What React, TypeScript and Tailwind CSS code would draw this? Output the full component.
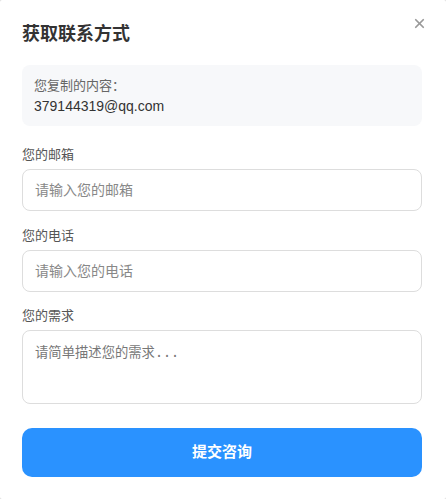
import React from "react";
import { X } from "lucide-react";

const cjk = "font-['Liberation_Sans','Noto_Sans_CJK_SC',sans-serif]";

export default function App() {
  return (
    <div className={`w-[446px] h-[499px] bg-[#d8d8d8] ${cjk}`}>
      <div className="relative w-full h-full bg-white rounded-[2px] pt-[22px] pl-[22px] pr-[24px] flex flex-col">
        <button className="absolute top-[14px] right-[17px] text-[#999] p-0.5">
          <X size={15} strokeWidth={2.8} />
        </button>

        <h2 className="text-[18px] leading-[24px] font-bold text-[#333]">获取联系方式</h2>

        <div className="mt-[19px] bg-[#f7f8fa] rounded-[8px] px-[12px] pt-[12px] pb-[9px]">
          <p className="text-[13px] leading-[18px] text-[#666]">您复制的内容：</p>
          <p className="text-[14px] leading-[22px] text-[#333]">379144319@qq.com</p>
        </div>

        <label className="mt-[20px] mb-[5px] text-[13px] leading-[18px] text-[#555]">您的邮箱</label>
        <input
          className="h-[42px] w-full rounded-[8px] border border-[#ddd] px-[12px] text-[14px] text-[#333] placeholder:text-[#888] outline-none"
          placeholder="请输入您的邮箱"
        />

        <label className="mt-[16px] mb-[5px] text-[13px] leading-[18px] text-[#555]">您的电话</label>
        <input
          className="h-[42px] w-full rounded-[8px] border border-[#ddd] px-[12px] text-[14px] text-[#333] placeholder:text-[#888] outline-none"
          placeholder="请输入您的电话"
        />

        <label className="mt-[15px] mb-[5px] text-[13px] leading-[18px] text-[#555]">您的需求</label>
        <textarea
          className="h-[74px] w-full resize-none rounded-[8px] border border-[#ddd] px-[12px] pt-[13px] pb-[10px] text-[13.333px] leading-[18px] text-[#333] placeholder:text-[#777] outline-none font-['DejaVu_Sans_Mono','Noto_Sans_CJK_SC',monospace]"
          placeholder="请简单描述您的需求..."
        />

        <button className="mt-[24px] h-[49px] w-full rounded-[10px] bg-[#2a92ff] text-white text-[15px] font-bold">
          提交咨询
        </button>
      </div>
    </div>
  );
}
